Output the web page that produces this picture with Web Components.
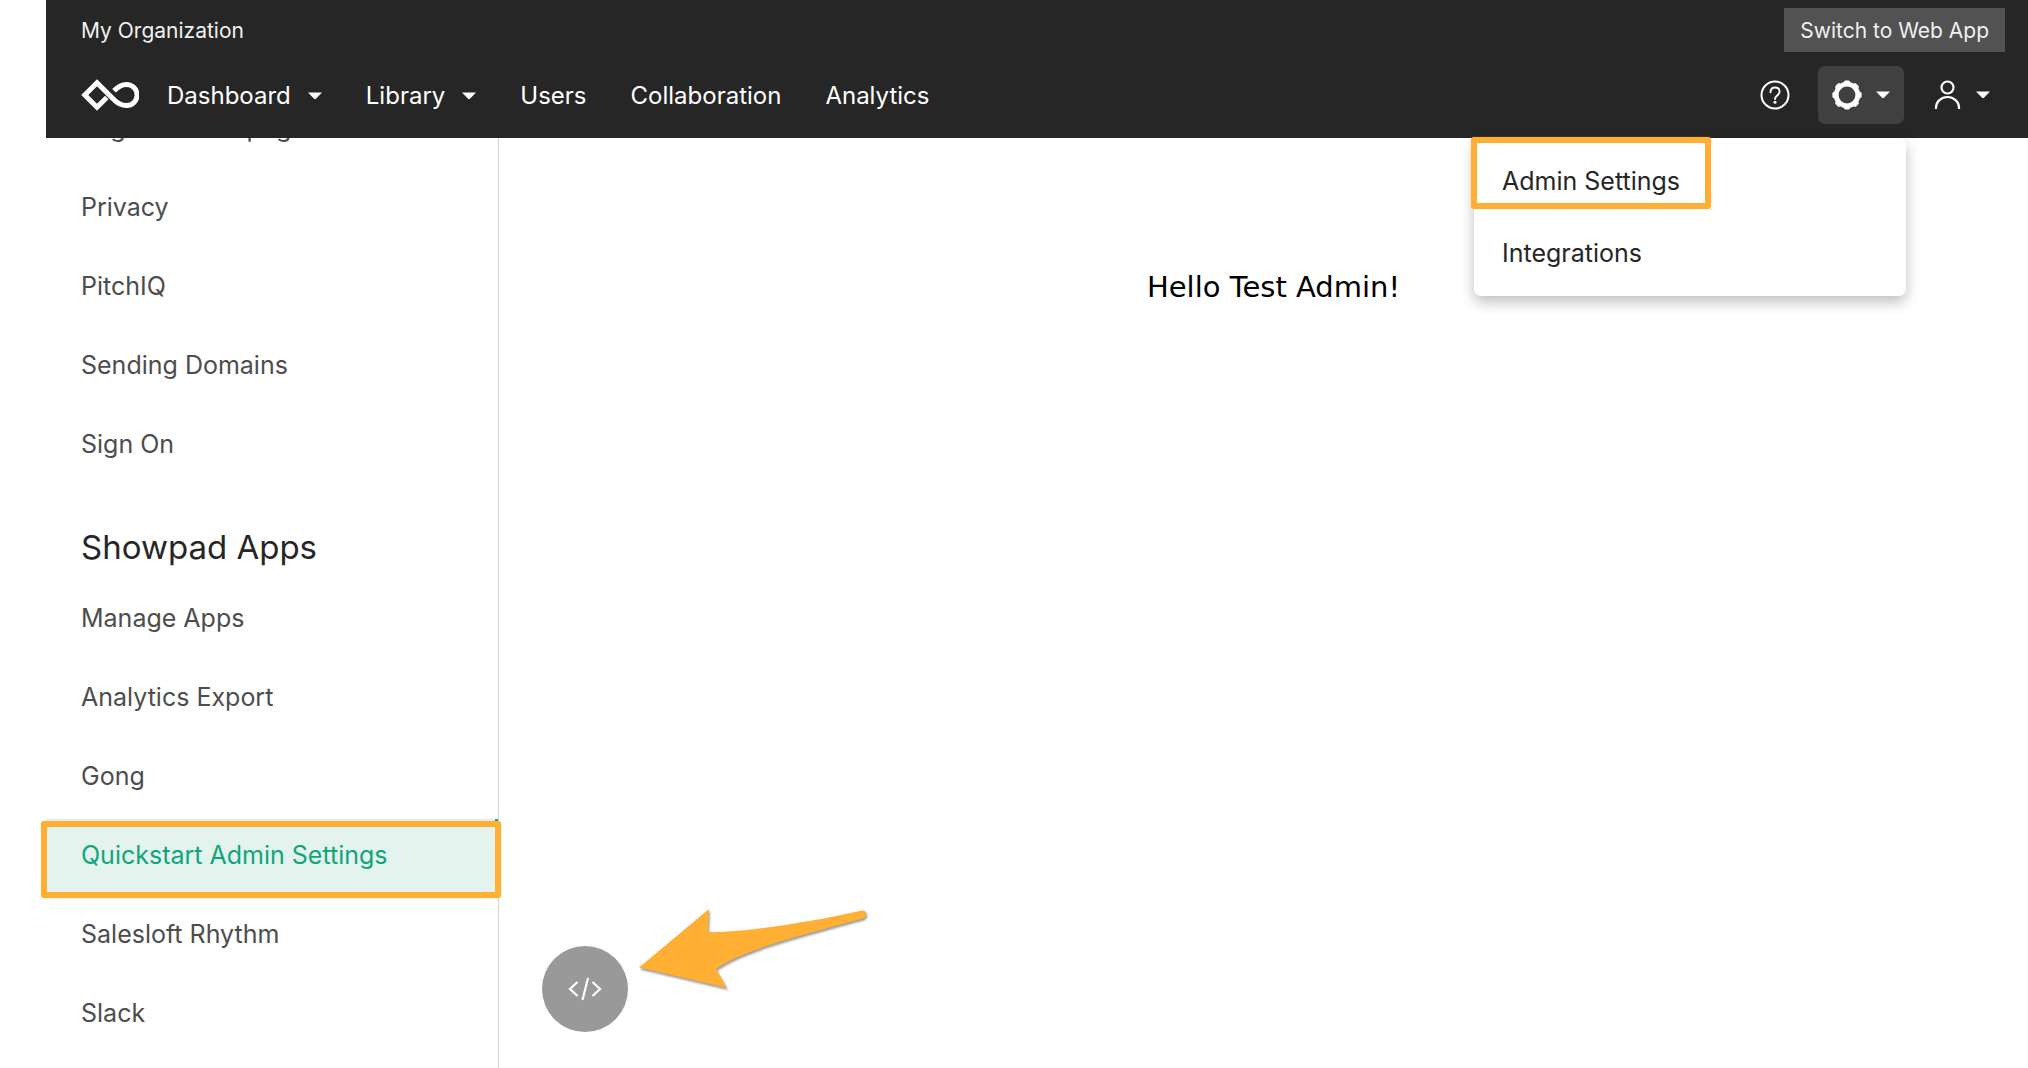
<!DOCTYPE html>
<html lang="en">
<head>
<meta charset="utf-8">
<title>Admin Settings</title>
<style>
html, body { margin: 0; height: 100%; }
body { background: #fff; font-family: Inter, "Liberation Sans", sans-serif; overflow: hidden; }
</style>
</head>
<body>
<admin-shell>
  <app-header slot="header"></app-header>
  <side-nav slot="nav">
    <nav-item>Login &amp; Homepage</nav-item>
    <nav-item>Privacy</nav-item>
    <nav-item>PitchIQ</nav-item>
    <nav-item>Sending Domains</nav-item>
    <nav-item>Sign On</nav-item>
    <nav-heading>Showpad Apps</nav-heading>
    <nav-item>Manage Apps</nav-item>
    <nav-item>Analytics Export</nav-item>
    <nav-item>Gong</nav-item>
    <nav-item current>Quickstart Admin Settings</nav-item>
    <nav-item>Salesloft Rhythm</nav-item>
    <nav-item>Slack</nav-item>
  </side-nav>
  <welcome-panel>Hello Test Admin!</welcome-panel>
</admin-shell>
<script>
const define = (name, html, setup) => customElements.define(name, class extends HTMLElement {
  constructor() {
    super();
    this.attachShadow({ mode: 'open' }).innerHTML = html;
  }
  connectedCallback() { if (setup) setup(this, this.shadowRoot); }
});

define('caret-icon', `
<style>:host { display: flex; } svg { display: block; }</style>
<svg width="14" height="8" viewBox="0 0 14 8" aria-hidden="true"><path d="M0 .5h14L8.2 6.6q-1.2 1.1-2.4 0z" fill="#fff"/></svg>`);

define('callout-box', `
<style>:host { display: block; position: absolute; box-sizing: border-box; border: 6px solid #ffaf33; border-radius: 3px; pointer-events: none; box-shadow: 0 0 1px #ffaf33; }</style>`);

define('nav-link', `
<style>
:host { display: flex; }
a { display: flex; align-items: center; gap: 17px; color: #fff; text-decoration: none; font-size: 24px; line-height: 32px; }
</style>
<a href="#"><slot></slot></a>`, (el, root) => {
  if (el.hasAttribute('menu') && !root.querySelector('caret-icon'))
    root.querySelector('a').append(document.createElement('caret-icon'));
});

define('menu-item', `
<style>
:host { display: block; position: relative; }
a { display: block; padding: 20px 28px; font-size: 25px; line-height: 32px; color: #262626; text-decoration: none; }
</style>
<a href="#"><slot></slot></a>
<slot name="callout"></slot>`);

define('drop-menu', `
<style>
:host { display: block; box-sizing: border-box; width: 432px; padding: 7px 0; background: #fff; border-radius: 7px; box-shadow: 0 6px 14px rgba(0,0,0,.26); }
</style>
<slot></slot>`);

define('app-header', `
<style>
:host { display: block; position: relative; z-index: 2; background: #262626; color: #fff; }
.top { display: flex; justify-content: space-between; padding: 8px 23px 0 35px; font-size: 21px; line-height: 42px; color: #f0f0f0; }
.top span { padding-top: 2px; }
.top button { border: 0; padding: 2px 16px 0; background: #525252; color: #f0f0f0; font: inherit; }
.bar { display: flex; align-items: center; height: 58px; padding: 14px 38px 14px 35px; }
.logo { display: flex; margin-right: 28px; }
nav { display: flex; gap: 44px; flex: 1; padding-top: 2px; }
.tools { display: flex; align-items: center; }
.tools button { display: flex; align-items: center; border: 0; padding: 0; height: 58px; background: none; }
.tools .gear { margin: 0 30px 0 28px; padding: 0 14px; gap: 14px; background: #404040; border-radius: 7px; }
.tools .user { gap: 15px; }
svg { display: block; }
.menu { position: absolute; top: 100%; right: 122px; z-index: -1; }
.menu callout-box { top: -8px; left: -3px; width: 240px; height: 72px; }
</style>
<div class="top"><span>My Organization</span><button type="button">Switch to Web App</button></div>
<div class="bar">
  <a class="logo" href="#" aria-label="Home">
    <svg width="58" height="34" viewBox="0 0 58 34" fill="none" stroke="#fff" stroke-width="5" stroke-linejoin="miter">
      <path d="M25.800 19.500 16 29.300 3.800 17 16 4.800 32 20.800C36.500 25.600 40 27.600 45.500 27.600a10.600 10.600 0 0 0 0-21.200C40.500 6.400 37 8.500 33 12.800"/>
    </svg>
  </a>
  <nav aria-label="Main">
    <nav-link menu>Dashboard</nav-link>
    <nav-link menu>Library</nav-link>
    <nav-link>Users</nav-link>
    <nav-link>Collaboration</nav-link>
    <nav-link>Analytics</nav-link>
  </nav>
  <div class="tools">
    <button type="button" aria-label="Help">
      <svg width="30" height="30" viewBox="0 0 30 30" fill="none" stroke="#fff" stroke-width="2">
        <circle cx="15" cy="15" r="13.500"/>
        <path d="M10.500 12.200c0-3 2-4.700 4.600-4.700 2.700 0 4.500 1.700 4.500 4.100 0 4-4.600 3.700-4.600 7.400" stroke-width="1.900" stroke-linecap="round"/>
        <circle cx="15" cy="22.300" r="1.500" fill="#fff" stroke="none"/>
      </svg>
    </button>
    <button class="gear" type="button" aria-label="Settings">
      <svg width="30" height="30" viewBox="0 0 30 30" fill="none" stroke="#fff">
        <circle cx="15" cy="15" r="10.800" stroke-width="4.800"/>
        <g fill="#fff" stroke="none">
          <g id="teeth"><rect x="11.800" y=".4" width="6.400" height="5" rx="1.800"/><rect x="11.800" y="24.600" width="6.400" height="5" rx="1.800"/><rect x=".4" y="11.800" width="5" height="6.400" rx="1.800"/><rect x="24.600" y="11.800" width="5" height="6.400" rx="1.800"/></g>
          <use href="#teeth" transform="rotate(45 15 15)"/>
        </g>
      </svg>
      <caret-icon></caret-icon>
    </button>
    <button class="user" type="button" aria-label="Account">
      <svg width="27" height="30" viewBox="0 0 27 30" fill="none" stroke="#fff" stroke-width="2.200">
        <circle cx="13.500" cy="7.500" r="6"/>
        <path d="M2 29v-1.500a11.500 10.500 0 0 1 23 0V29"/>
      </svg>
      <caret-icon></caret-icon>
    </button>
  </div>
</div>
<div class="menu">
  <drop-menu>
    <menu-item>Admin Settings<callout-box slot="callout"></callout-box></menu-item>
    <menu-item>Integrations</menu-item>
  </drop-menu>
</div>`);

define('nav-heading', `
<style>
:host { display: block; }
h2 { margin: 0; padding: 40px 35px 15px; font-size: 33px; line-height: 40px; font-weight: 400; color: #262626; }
</style>
<h2><slot></slot></h2>`);

define('nav-item', `
<style>
:host { display: block; }
a { display: block; padding: 20px 35px 27px; font-size: 25px; line-height: 32px; color: #4d4d4d; text-decoration: none; }
:host([current]) a { color: #0fa67c; background: #e5f3ee; box-shadow: inset -3px 0 #0fa67c; }
</style>
<a href="#"><slot></slot></a>`);

define('side-nav', `
<style>
:host { display: block; position: relative; height: 100%; }
nav { box-sizing: border-box; height: 100%; overflow-y: auto; scrollbar-width: none; padding-bottom: 80px; border-right: 1px solid #d4d4d4; }
callout-box { left: -5px; right: -2px; top: 683px; height: 77px; }
</style>
<nav aria-label="Settings"><slot></slot></nav>
<callout-box></callout-box>`, (el, root) => {
  requestAnimationFrame(() => { root.querySelector('nav').scrollTop = 46; });
});

define('welcome-panel', `
<style>
:host { display: flex; flex-direction: column; justify-content: space-between; box-sizing: border-box; height: 100%; padding: 129px 23px 36px 43px; }
h1 { margin: 0; font: 400 29px/40px "DejaVu Sans", sans-serif; color: #000; text-align: center; }
.foot { display: flex; align-items: flex-end; gap: 11px; }
button { display: flex; align-items: center; justify-content: center; width: 86px; height: 86px; border: 0; padding: 0; border-radius: 50%; background: #999; }
.arrow { margin-bottom: 40px; filter: drop-shadow(1px 2px 1px rgba(0,0,0,.4)); }
</style>
<h1><slot></slot></h1>
<div class="foot">
  <button type="button" aria-label="Developer tools">
    <svg width="36" height="24" viewBox="0 0 36 24" fill="none" stroke="#fff" stroke-width="2.200"><path d="M10.500 5 3 12l7.500 7M25.500 5l7.500 7-7.500 7M21 1l-5.500 22"/></svg>
  </button>
  <svg class="arrow" width="230" height="84" viewBox="0 0 230 84"><path d="M0 59.500 70 1l-1 23C97 25.500 168 15 223 2.500c5-.5 6 6 1 8C166 26.500 105 41 77 61l11 19z" fill="#ffaf33"/></svg>
</div>`);

define('admin-shell', `
<style>
:host { display: grid; grid-template: auto minmax(0, 1fr) / 453px minmax(0, 1fr); height: 100vh; padding-left: 46px; box-sizing: border-box; }
slot[name=header] { display: block; grid-column: 1 / -1; position: relative; z-index: 2; }
slot[name=nav], .main { display: block; min-height: 0; }
</style>
<slot name="header"></slot>
<slot name="nav"></slot>
<div class="main"><slot></slot></div>`);
</script>
</body>
</html>
